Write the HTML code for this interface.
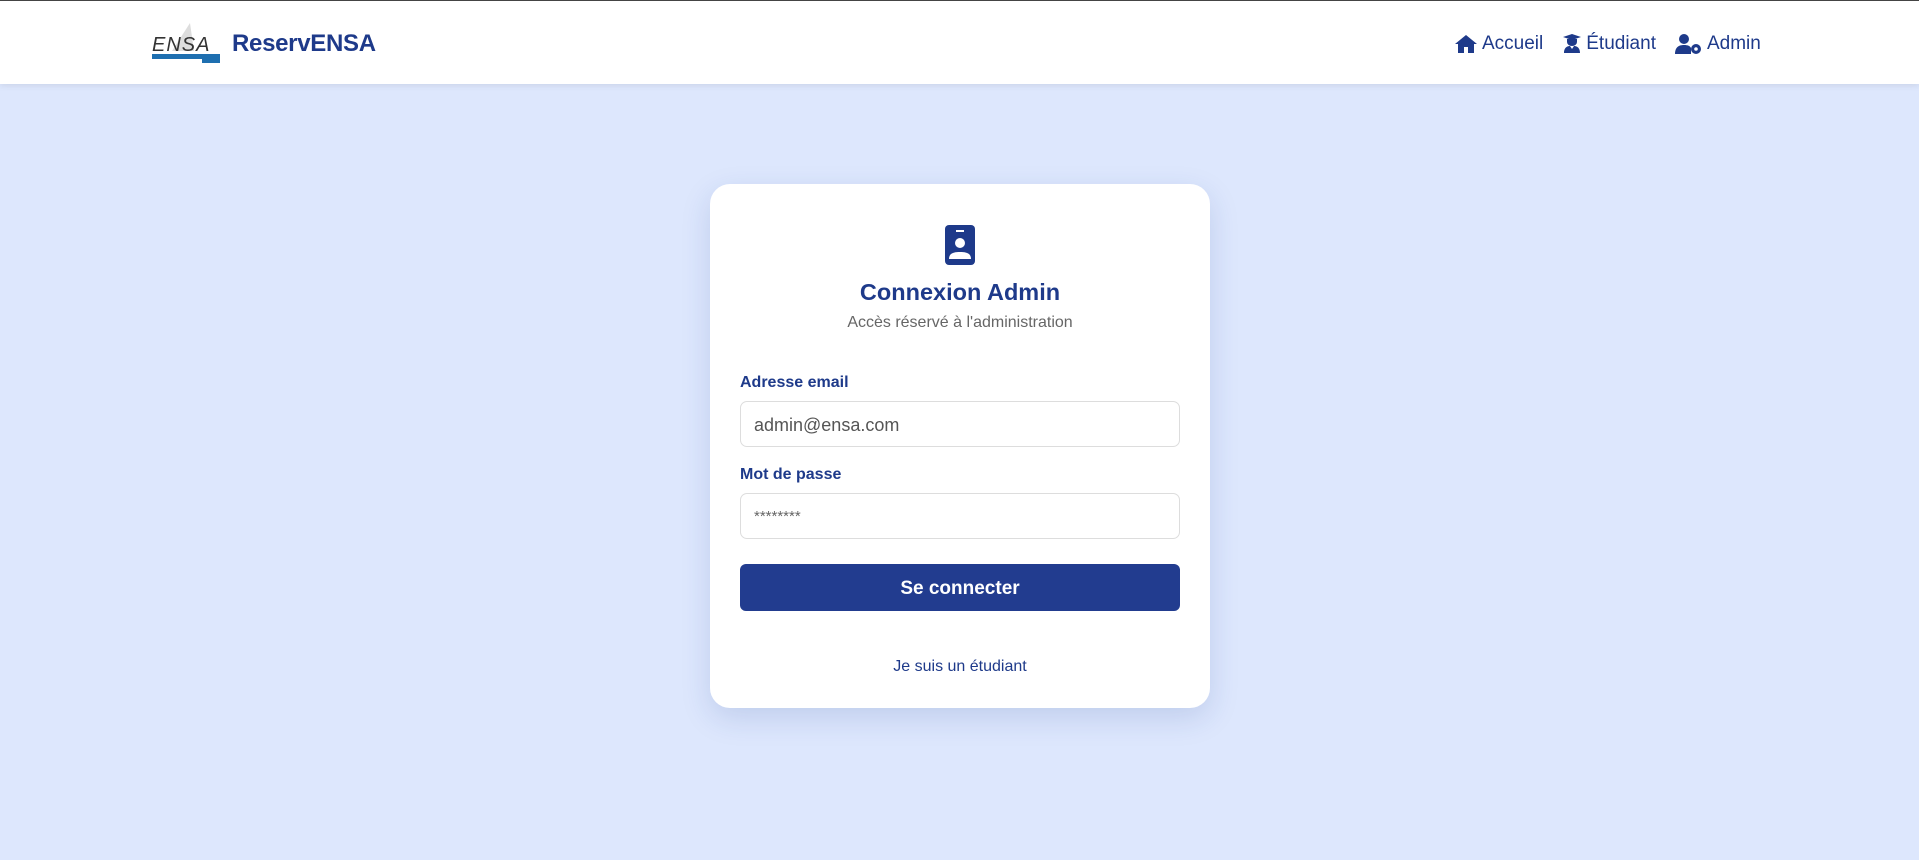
<!DOCTYPE html>
<html><head><meta charset="utf-8"><style>
*{box-sizing:border-box;margin:0;padding:0}
body{width:1919px;height:860px;background:#dde7fd;font-family:"Liberation Sans",sans-serif;position:relative;overflow:hidden}
.nav{position:absolute;top:0;left:0;width:1919px;height:84px;background:#fff;border-top:1px solid #444;box-shadow:0 2px 6px rgba(0,0,0,.08)}
.brand{position:absolute;left:232px;top:29px;font-size:24px;font-weight:bold;color:#1e3a8a;letter-spacing:-0.3px}
.links{position:absolute;top:32px;font-size:19px;color:#1e3a8a;display:flex;align-items:center}
.links span{display:flex;align-items:center;margin-right:19px}
.links svg{margin-right:4px}
.card{position:absolute;left:710px;top:184px;width:500px;height:524px;background:#fff;border-radius:20px;box-shadow:0 10px 30px rgba(30,58,138,.15)}
.c{position:absolute;left:0;width:500px;text-align:center}
.lbl{position:absolute;left:30px;font-size:16px;font-weight:bold;color:#1e3a8a}
.inp{position:absolute;left:30px;width:440px;height:46px;border:1px solid #ddd;border-radius:7px;padding-left:13px;line-height:46px;font-size:18px;color:#555}
.btn{position:absolute;left:30px;top:380px;width:440px;height:47px;background:#223c8f;border-radius:6px;color:#fff;font-weight:bold;font-size:19px;text-align:center;line-height:50px}
</style></head><body>
<div class="nav">
<svg style="position:absolute;left:150px;top:20px" width="72" height="46" viewBox="0 0 72 46">
<path d="M40 2 L44 30 L22 30 Z" fill="#ddd"/>
<text x="2" y="30" font-family="Liberation Sans" font-style="italic" font-size="20" fill="#333" letter-spacing="1">ENSA</text>
<rect x="2" y="33" width="68" height="5" fill="#1e6fb0"/>
<rect x="52" y="36" width="18" height="6" fill="#1e6fb0"/>
</svg>
<div class="brand">ReservENSA</div>
<div class="links" style="left:1454px">
<span><svg width="24" height="20" viewBox="0 0 24 20"><path d="M12 1 L1 10 L4 10 L4 19 L10 19 L10 13 L14 13 L14 19 L20 19 L20 10 L23 10 Z" fill="#1e3a8a"/></svg>Accueil</span>
<span><svg width="20" height="20" viewBox="0 0 20 20"><path d="M1 3 L10 0 L19 3 L10 6 Z M5 5 L15 5 L15 8 A5 4 0 0 1 5 8 Z M2 19 C2 13 6 12 8 12 L10 15 L12 12 C14 12 18 13 18 19 Z" fill="#1e3a8a"/></svg>Étudiant</span>
<span><svg width="28" height="22" viewBox="0 0 28 22"><circle cx="9" cy="6" r="5" fill="#1e3a8a"/><path d="M0 21 C0 14 4 12 9 12 C13 12 15 13 16 15 L16 21 Z" fill="#1e3a8a"/><circle cx="21" cy="16" r="5" fill="#1e3a8a"/><circle cx="21" cy="16" r="1.8" fill="#fff"/></svg>Admin</span>
</div>
</div>
<div class="card">
<svg style="position:absolute;left:235px;top:41px" width="30" height="40" viewBox="0 0 30 40"><rect x="0" y="0" width="30" height="40" rx="4" fill="#1e3a8a"/><rect x="11" y="5" width="8" height="2" fill="#fff"/><circle cx="15" cy="18" r="5" fill="#fff"/><path d="M4 34 C4 28 9 27 15 27 C21 27 26 28 26 34 Z" fill="#fff"/></svg>
<div class="c" style="top:95px;font-size:23.5px;font-weight:bold;color:#1e3a8a">Connexion Admin</div>
<div class="c" style="top:130px;font-size:16px;color:#666">Accès réservé à l'administration</div>
<div class="lbl" style="top:190px">Adresse email</div>
<div class="inp" style="top:217px">admin@ensa.com</div>
<div class="lbl" style="top:282px">Mot de passe</div>
<div class="inp" style="top:309px;font-size:15px;color:#666">********</div>
<div class="btn">Se connecter</div>
<div class="c" style="top:474px;font-size:16px;color:#1e3a8a">Je suis un étudiant</div>
</div>
</body></html>
